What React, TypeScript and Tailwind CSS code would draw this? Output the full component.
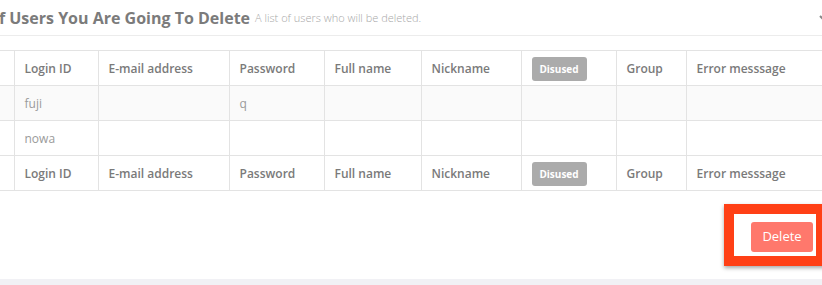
import React from "react";

const columns = [
  { key: "login", label: "Login ID", w: "w-[84px]" },
  { key: "email", label: "E-mail address", w: "w-[131px]" },
  { key: "password", label: "Password", w: "w-[95px]" },
  { key: "fullname", label: "Full name", w: "w-[97px]" },
  { key: "nickname", label: "Nickname", w: "w-[100px]" },
  { key: "disused", label: "Disused", w: "w-[95px]" },
  { key: "group", label: "Group", w: "w-[70px]" },
  { key: "error", label: "Error messsage", w: "w-[200px]" },
];

const users: Record<string, string>[] = [
  { login: "fuji", password: "q" },
  { login: "nowa" },
];

function HeaderRow() {
  return (
    <tr className="h-[35px]">
      <th className="border border-[#e3e3e3] border-l-0" />
      {columns.map((c) => (
        <th
          key={c.key}
          className="border border-[#e3e3e3] px-[10px] pt-[2px] text-left text-[12px] font-semibold text-[#7a7a7a]"
        >
          {c.key === "disused" ? (
            <span className="inline-flex h-[24px] w-[55px] items-center justify-center rounded-[3px] bg-[#ababab] text-[10px] font-bold text-white">
              {c.label}
            </span>
          ) : (
            c.label
          )}
        </th>
      ))}
    </tr>
  );
}

export default function App() {
  return (
    <div className="relative h-[285px] w-[822px] overflow-hidden bg-white font-['Open_Sans',sans-serif]">
      {/* Section header */}
      <div className="relative flex h-[36px] items-center border-b border-[#ececec] whitespace-nowrap">
        <h2 className="ml-[-11px] text-[16px] font-bold text-[#7b7b7b]">
          of Users You Are Going To Delete
        </h2>
        <span className="ml-[5px] mt-[2px] text-[11px] font-light text-[#a8a8a8]">
          A list of users who will be deleted.
        </span>
        <svg
          className="absolute right-[-8px] top-[12px] h-[12px] w-[12px] text-[#888]"
          viewBox="0 0 12 12"
          fill="none"
          stroke="currentColor"
          strokeWidth="2"
        >
          <path d="M2 4l4 4 4-4" />
        </svg>
      </div>

      {/* Users table */}
      <div className="pt-[14px]">
        <table className="ml-[-1px] w-[887px] table-fixed border-collapse">
          <colgroup>
            <col className="w-[15px]" />
            {columns.map((c) => (
              <col key={c.key} className={c.w} />
            ))}
          </colgroup>
          <thead>
            <HeaderRow />
          </thead>
          <tbody>
            {users.map((u, i) => (
              <tr
                key={i}
                className={`h-[35px] ${i % 2 === 0 ? "bg-[#fafafa]" : "bg-white"}`}
              >
                <td className="border border-[#e3e3e3] border-l-0" />
                {columns.map((c) => (
                  <td
                    key={c.key}
                    className="border border-[#e3e3e3] px-[10px] pt-[2px] text-[12px] font-normal text-[#9a9a9a]"
                  >
                    {u[c.key] ?? ""}
                  </td>
                ))}
              </tr>
            ))}
          </tbody>
          <tfoot>
            <HeaderRow />
          </tfoot>
        </table>
      </div>

      {/* Actions */}
      <div className="flex justify-end pr-[9px] pt-[31px]">
        <button className="h-[30px] w-[62px] rounded-[3px] bg-[#ff786c] text-[13px] text-white">
          Delete
        </button>
      </div>

      {/* highlight overlay */}
      <div className="absolute left-[724px] top-[204px] h-[62px] w-[102px] border-[10px] border-[#ff4016] shadow-[0_2px_4px_rgba(0,0,0,0.35)]" />

      <div className="absolute bottom-0 left-0 h-[6px] w-full bg-[#f1f1f5]" />
    </div>
  );
}
